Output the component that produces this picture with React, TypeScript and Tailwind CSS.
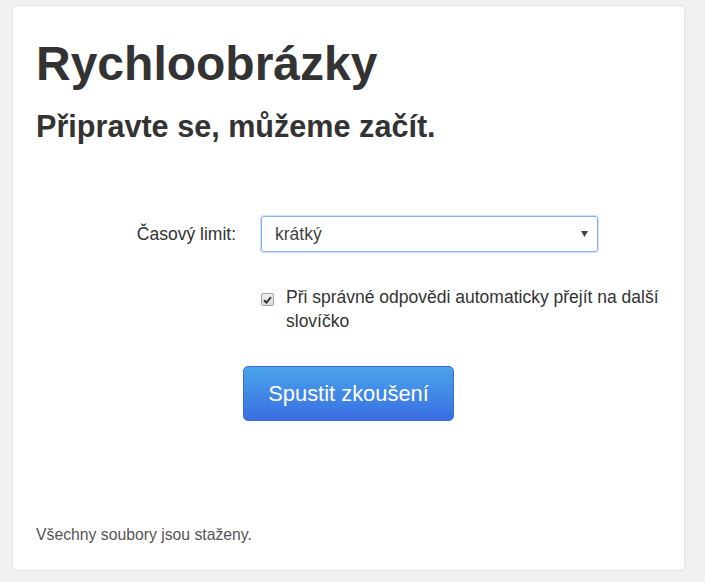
import React from "react";

export default function App() {
  return (
    <div
      className="w-[705px] h-[582px] bg-[#f1f1f1] overflow-hidden pt-[5px] pl-[12px]"
      style={{ fontFamily: '"Liberation Sans", Arial, sans-serif' }}
    >
      <div className="w-[673px] h-[566px] bg-white border border-[#e4e4e4] rounded-[4px] px-[23px] flex flex-col text-[#333]">
        <h1 className="mt-[31px] text-[48px] leading-[53px] font-bold text-[#333]">
          Rychloobrázky
        </h1>
        <h2 className="mt-[19px] text-[30.6px] leading-[34px] font-bold text-[#333]">
          Připravte se, můžeme začít.
        </h2>

        <div className="mt-[73px] flex items-center">
          <label className="w-[200px] text-right text-[17.5px] leading-[25px]">
            Časový limit:
          </label>
          <div className="ml-[25px] w-[337px] h-[36px] border border-[#86b1f2] rounded-[3px] flex items-center justify-between pl-[13px] pr-[9px] shadow-[0_0_0_1px_rgba(120,165,240,0.35)]">
            <span className="text-[17.5px] leading-[25px] text-[#444]">krátký</span>
            <svg width="7" height="6" viewBox="0 0 7 6">
              <path d="M0 0 L7 0 L3.5 6 Z" fill="#444" />
            </svg>
          </div>
        </div>

        <div className="mt-[33px] flex items-start ml-[225px]">
          <span className="mt-[8px] w-[13px] h-[13px] shrink-0 rounded-[2px] border border-[#a3a3a3] bg-gradient-to-b from-[#f1f1f1] to-[#dcdcdc] flex items-center justify-center">
            <svg width="9" height="8" viewBox="0 0 9 8">
              <path d="M1 4.3 L3.4 6.6 L8 1.2" stroke="#333" strokeWidth="2" fill="none" />
            </svg>
          </span>
          <span className="ml-[12px] w-[385px] text-[17.5px] leading-[24px] text-[#333]">
            Při správné odpovědi automaticky přejít na další slovíčko
          </span>
        </div>

        <div className="mt-[33px] flex justify-center">
          <button className="w-[211px] h-[55px] rounded-[5px] border border-[#3a6fd8] bg-gradient-to-b from-[#4aa3ea] to-[#3b6ee2] text-white text-[21.9px] leading-[30px]">
            Spustit zkoušení
          </button>
        </div>

        <p className="mt-[103px] text-[15.75px] leading-[22px] text-[#555]">
          Všechny soubory jsou staženy.
        </p>
      </div>
    </div>
  );
}
